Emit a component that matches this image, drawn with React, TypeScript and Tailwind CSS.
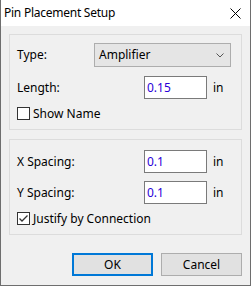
import React from "react";

const font = { fontFamily: '"Noto Sans", "Liberation Sans", sans-serif' };

function CheckBox({ checked }: { checked?: boolean }) {
  return (
    <div className="w-[13px] h-[13px] border border-[#333333] bg-white flex items-center justify-center shrink-0">
      {checked && (
        <svg width="11" height="11" viewBox="0 0 11 11">
          <path d="M1.5 5.5 L4 8 L9.5 2.5" fill="none" stroke="#333333" strokeWidth="1.3" />
        </svg>
      )}
    </div>
  );
}

function NumField({ value }: { value: string }) {
  return (
    <div className="flex items-center">
      <div className="w-[63px] h-[23px] border border-[#7a7a7a] bg-white flex items-center pl-[2px] text-[12px] text-[#2a00d8]">
        {value}
      </div>
      <span className="ml-[6px] text-[12px] text-black">in</span>
    </div>
  );
}

export default function App() {
  return (
    <div
      className="w-[251px] h-[286px] bg-[#f0f0f0] border-x border-b border-[#6e6e6e] flex flex-col text-black text-[12px] leading-none"
      style={font}
    >
      <div className="h-[26px] bg-white flex items-center justify-between pl-[3px] pr-[9px] shrink-0">
        <span className="text-[12px] tracking-[-0.25px]">Pin Placement Setup</span>
        <svg width="11" height="11" viewBox="0 0 11 11">
          <path d="M0.5 0.5 L10.5 10.5 M10.5 0.5 L0.5 10.5" stroke="#000" strokeWidth="1" />
        </svg>
      </div>
      <div className="flex flex-col px-[8px] pt-[8px]">
        <div className="h-[96px] border border-[#dcdcdc] pl-[7px] pt-[8px] flex flex-col">
          <div className="flex items-center h-[24px]">
            <span className="w-[77px]">Type:</span>
            <div className="w-[137px] h-[24px] border border-[#adadad] bg-[#e5e5e5] flex items-center justify-between pl-[4px] pr-[6px]">
              <span>Amplifier</span>
              <svg width="8" height="5" viewBox="0 0 8 5">
                <path d="M0.5 0.5 L4 4 L7.5 0.5" fill="none" stroke="#555" strokeWidth="1" />
              </svg>
            </div>
          </div>
          <div className="flex items-center mt-[9px]">
            <span className="w-[127px]">Length:</span>
            <NumField value="0.15" />
          </div>
          <div className="flex items-center mt-[8px]">
            <CheckBox />
            <span className="ml-[3px]">Show Name</span>
          </div>
        </div>
        <div className="h-[96px] mt-[9px] border border-[#dcdcdc] pl-[7px] pt-[10px] flex flex-col">
          <div className="flex items-center">
            <span className="w-[127px]">X Spacing:</span>
            <NumField value="0.1" />
          </div>
          <div className="flex items-center mt-[8px]">
            <span className="w-[127px]">Y Spacing:</span>
            <NumField value="0.1" />
          </div>
          <div className="flex items-center mt-[8px]">
            <CheckBox checked />
            <span className="ml-[3px]">Justify by Connection</span>
          </div>
        </div>
        <div className="flex justify-end gap-[8px] mt-[18px]">
          <div className="w-[81px] h-[23px] border-2 border-[#0078d7] bg-[#e1e1e1] flex items-center justify-center">OK</div>
          <div className="w-[81px] h-[23px] border border-[#adadad] bg-[#e1e1e1] flex items-center justify-center">Cancel</div>
        </div>
      </div>
    </div>
  );
}
